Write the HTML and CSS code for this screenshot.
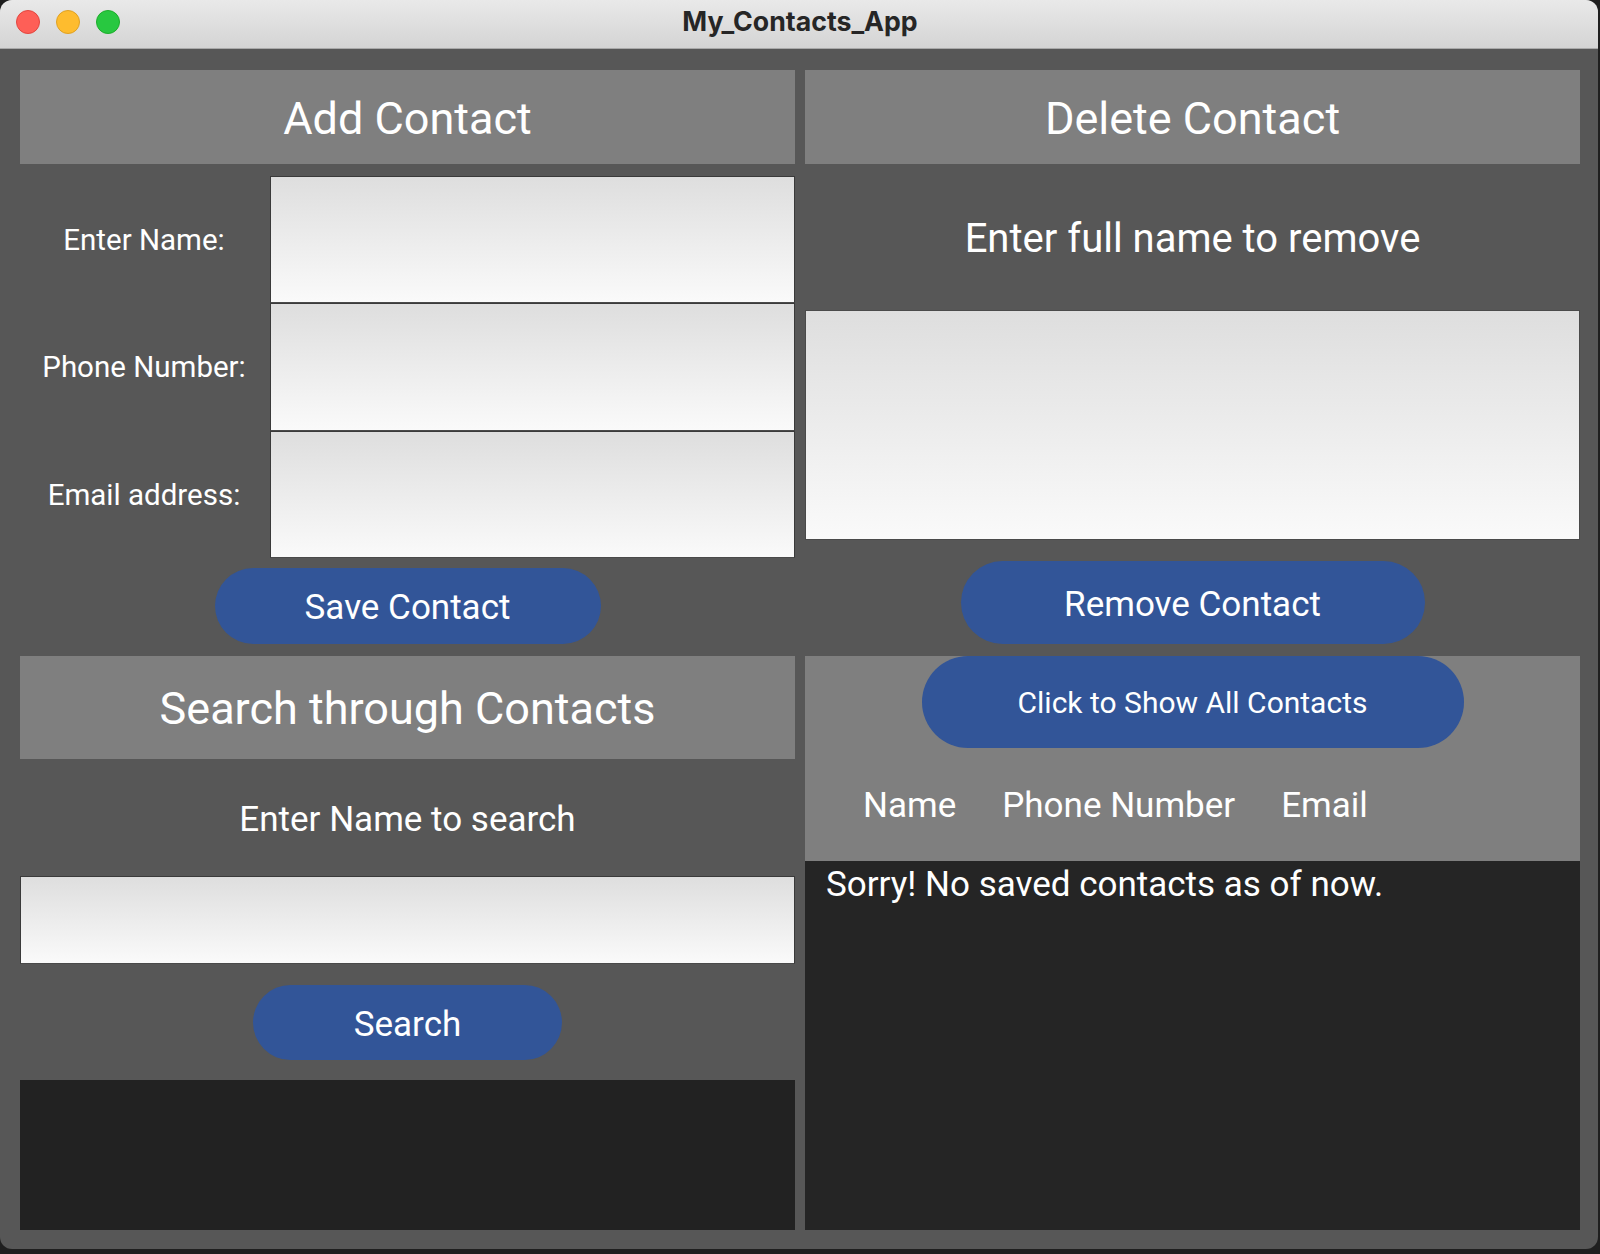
FILE: index.html
```html
<!DOCTYPE html>
<html>
<head>
<meta charset="utf-8">
<title>My_Contacts_App</title>
<link rel="stylesheet" href="styles.css">
</head>
<body>
<div class="window">
  <div class="titlebar">
    <div class="lights">
      <span class="light red"></span>
      <span class="light yellow"></span>
      <span class="light green"></span>
    </div>
    <div class="title">My_Contacts_App</div>
  </div>
  <div class="content">
    <div class="col">
      <div class="header">Add Contact</div>
      <div class="form">
        <div class="label">Enter Name:</div>
        <input class="field" type="text">
        <div class="label">Phone Number:</div>
        <input class="field" type="text">
        <div class="label">Email address:</div>
        <input class="field" type="text">
      </div>
      <button class="pill save">Save Contact</button>
      <div class="header search-header">Search through Contacts</div>
      <div class="prompt">Enter Name to search</div>
      <input class="field search-field" type="text">
      <button class="pill search">Search</button>
      <div class="result"></div>
    </div>
    <div class="col">
      <div class="header">Delete Contact</div>
      <div class="prompt prompt-lg">Enter full name to remove</div>
      <input class="field delete-field" type="text">
      <button class="pill remove">Remove Contact</button>
      <div class="list-panel">
        <button class="pill show">Click to Show All Contacts</button>
        <div class="cols">
          <span>Name</span>
          <span>Phone Number</span>
          <span>Email</span>
        </div>
      </div>
      <div class="list">Sorry! No saved contacts as of now.</div>
    </div>
  </div>
</div>
</body>
</html>
```

FILE: styles.css
```css
html, body {
  margin: 0;
  padding: 0;
}
body {
  width: 1600px;
  height: 1254px;
  overflow: hidden;
  background: #1f1f1f;
  font-family: Roboto, "Noto Sans", sans-serif;
}
.window {
  width: 1598px;
  height: 1249px;
  border-radius: 12px;
  overflow: hidden;
  background: #575757;
  display: flex;
  flex-direction: column;
}
.titlebar {
  height: 48px;
  flex: none;
  border-bottom: 1px solid #a9a9a9;
  background: linear-gradient(#e9e9e9, #d4d4d4);
  position: relative;
  display: flex;
  align-items: center;
  justify-content: center;
}
.lights {
  position: absolute;
  left: 16px;
  top: 10px;
  display: flex;
  gap: 16px;
}
.light {
  width: 24px;
  height: 24px;
  border-radius: 50%;
  box-sizing: border-box;
}
.red { background: #fe5f57; border: 1px solid #e2463f; }
.yellow { background: #febc2e; border: 1px solid #dfa123; }
.green { background: #28c840; border: 1px solid #1dad2b; }
.title {
  font-family: Inter, "Liberation Sans", sans-serif;
  font-weight: 700;
  font-size: 26.7px;
  color: #262626;
  margin-top: -7px;
  margin-left: 2px;
}
.content {
  flex: 1;
  display: flex;
  gap: 10px;
  padding: 21px 18px 19px 20px;
}
.col {
  width: 775px;
  display: flex;
  flex-direction: column;
}
.header {
  flex: none;
  height: 94px;
  background: #7f7f7f;
  color: #fff;
  font-size: 45px;
  display: flex;
  align-items: center;
  justify-content: center;
  padding-top: 2px;
  box-sizing: border-box;
}
.form {
  margin-top: 12px;
  display: grid;
  grid-template-columns: 250px 525px;
  grid-template-rows: 127px 128px 127px;
}
.label {
  color: #fff;
  font-size: 29.5px;
  display: flex;
  align-items: center;
  justify-content: center;
  padding-right: 2px;
}
.field {
  display: block;
  margin: 0;
  box-sizing: border-box;
  width: 100%;
  height: 100%;
  border: 1px solid #3a3a3a;
  border-bottom-color: #4a4a4a;
  background: linear-gradient(#dedede, #fafafa);
  outline: none;
  padding: 0;
}
.pill {
  flex: none;
  align-self: center;
  border: none;
  border-radius: 999px;
  background: #325598;
  color: #fff;
  font-family: Roboto, "Noto Sans", sans-serif;
  font-size: 35px;
  padding: 3px 0 0 0;
  margin: 0;
}
.save {
  margin-top: 10px;
  width: 386px;
  height: 76px;
}
.search-header {
  margin-top: 12px;
  height: 103px;
}
.prompt {
  flex: none;
  height: 117px;
  color: #fff;
  font-size: 35px;
  display: flex;
  align-items: center;
  justify-content: center;
  padding-top: 3px;
  box-sizing: border-box;
}
.search-field {
  flex: none;
  height: 88px;
}
.search {
  margin-top: 21px;
  width: 309px;
  height: 75px;
}
.result {
  margin-top: 20px;
  flex: 1;
  background: #222222;
}
.prompt-lg {
  height: 146px;
  font-size: 40px;
}
.delete-field {
  flex: none;
  height: 230px;
  border-color: #4a4a4a;
}
.remove {
  margin-top: 21px;
  width: 464px;
  height: 83px;
}
.list-panel {
  flex: none;
  margin-top: 12px;
  height: 205px;
  background: #7f7f7f;
  display: flex;
  flex-direction: column;
}
.show {
  width: 542px;
  height: 92px;
  font-size: 30px;
  padding-top: 1px;
}
.cols {
  flex: 1;
  display: flex;
  align-items: center;
  gap: 46px;
  padding-left: 58px;
  padding-top: 1px;
  color: #fff;
  font-size: 35px;
}
.list {
  flex: 1;
  background: #252525;
  color: #fff;
  font-size: 35px;
  padding: 3px 0 0 21px;
}
```
